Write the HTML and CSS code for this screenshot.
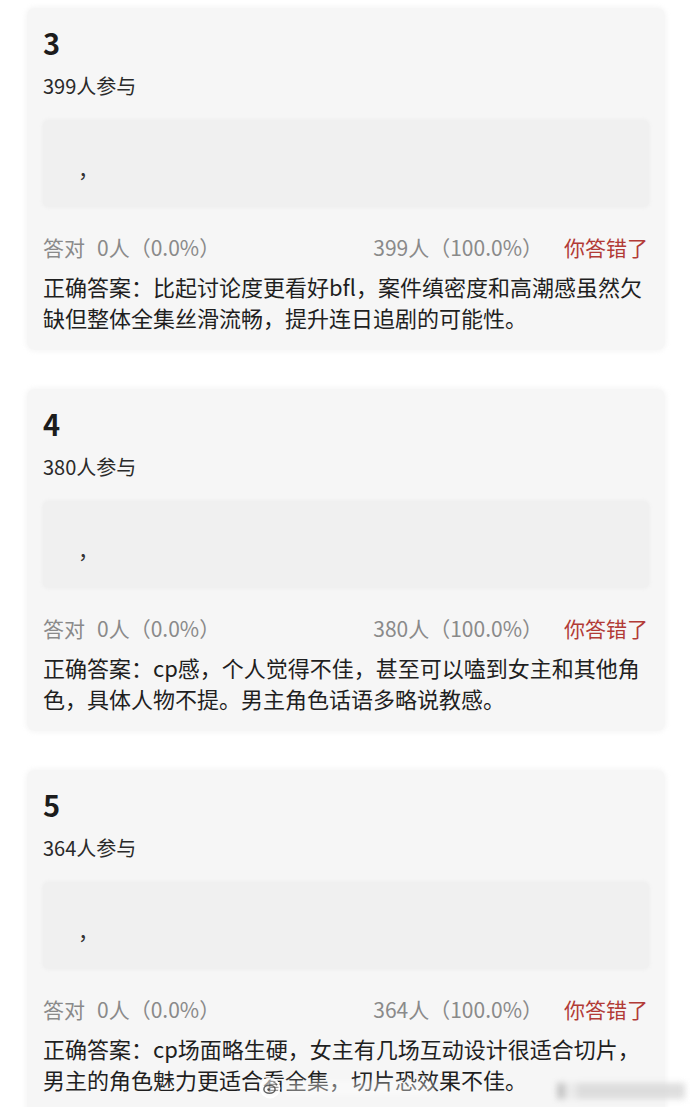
FILE: index.html
```html
<!DOCTYPE html>
<html lang="zh-CN">
<head>
<meta charset="utf-8">
<title>答题结果</title>
<link rel="stylesheet" href="styles.css">
</head>
<body>
<main class="list">
  <section class="card">
    <div class="q-no">3</div>
    <div class="q-count">399人参与</div>
    <div class="option"><span class="option-text">，</span></div>
    <div class="stats">
      <span class="right-count"><span class="label">答对</span>0人（0.0%）</span>
      <span class="wrong">
        <span class="wrong-count">399人（100.0%）</span>
        <span class="verdict">你答错了</span>
      </span>
    </div>
    <p class="answer">正确答案：比起讨论度更看好bfl，案件缜密度和高潮感虽然欠缺但整体全集丝滑流畅，提升连日追剧的可能性。</p>
  </section>

  <section class="card">
    <div class="q-no">4</div>
    <div class="q-count">380人参与</div>
    <div class="option"><span class="option-text">，</span></div>
    <div class="stats">
      <span class="right-count"><span class="label">答对</span>0人（0.0%）</span>
      <span class="wrong">
        <span class="wrong-count">380人（100.0%）</span>
        <span class="verdict">你答错了</span>
      </span>
    </div>
    <p class="answer">正确答案：cp感，个人觉得不佳，甚至可以嗑到女主和其他角色，具体人物不提。男主角色话语多略说教感。</p>
  </section>

  <section class="card card-last">
    <div class="q-no">5</div>
    <div class="q-count">364人参与</div>
    <div class="option"><span class="option-text">，</span></div>
    <div class="stats">
      <span class="right-count"><span class="label">答对</span>0人（0.0%）</span>
      <span class="wrong">
        <span class="wrong-count">364人（100.0%）</span>
        <span class="verdict">你答错了</span>
      </span>
    </div>
    <p class="answer">正确答案：cp场面略生硬，女主有几场互动设计很适合切片，男主的角色魅力更适合看全集，切片恐效果不佳。</p>
    <!-- faint share mark laid over the last card -->
    <div class="watermark" aria-hidden="true">
      <svg class="wm-logo" viewBox="0 0 22 22" width="22" height="22">
        <circle cx="11" cy="11" r="9.5" fill="rgba(255,255,255,0.55)" stroke="rgba(255,255,255,0.95)" stroke-width="1.8"/>
        <ellipse cx="10.5" cy="12.2" rx="5.6" ry="4" fill="none" stroke="rgba(60,60,60,0.8)" stroke-width="1.5"/>
        <circle cx="9.6" cy="12.6" r="1.3" fill="rgba(60,60,60,0.9)"/>
        <path d="M14.5 5.5 a3 3 0 0 1 3 3" fill="none" stroke="rgba(60,60,60,0.7)" stroke-width="1.2"/>
      </svg>
      <span class="wm-band"></span>
    </div>
    <div class="wm-blur"></div>
  </section>
</main>
</body>
</html>
```

FILE: styles.css
```css
html, body {
  margin: 0;
  padding: 0;
  background: #ffffff;
}

body {
  font-family: "Noto Sans CJK SC", "Noto Sans", sans-serif;
  color: #222222;
  overflow: hidden;
}

.list {
  display: flex;
  flex-direction: column;
  gap: 39px;
  padding: 8px 25px 0 27px;
}

.card {
  position: relative;
  background: #f6f6f6;
  border-radius: 8px;
  padding: 16px 16px 17px 16px;
  box-shadow: 0 0 4px 2px rgba(246, 246, 246, 0.9);
}

.q-no {
  font-size: 29px;
  font-weight: 700;
  line-height: 36px;
  color: #1c1c1c;
}

.q-count {
  margin-top: 11px;
  font-size: 20px;
  line-height: 30px;
  color: #2a2a2a;
}

.option {
  margin-top: 19px;
  height: 87px;
  display: flex;
  align-items: center;
  background: #f0f0f0;
  border-radius: 6px;
  padding-left: 35px;
  box-shadow: 0 0 3px 1px rgba(238, 238, 238, 0.8);
}

.option-text {
  font-size: 21px;
  line-height: 30px;
  color: #333333;
  transform: translateY(4px);
}

.stats {
  margin-top: 25px;
  display: flex;
  justify-content: space-between;
  align-items: center;
  font-size: 21px;
  line-height: 30px;
  color: #8a8a8a;
  padding-right: 1px;
}

.label {
  margin-right: 12px;
}

.wrong {
  display: flex;
  gap: 21px;
}

.verdict {
  color: #b23b36;
}

.answer {
  margin: 9px 0 0 0;
  font-size: 22px;
  line-height: 31px;
  color: #1f1f1f;
}

.card-last {
  padding-bottom: 40px;
}

.watermark {
  position: absolute;
  left: 232px;
  top: 307px;
  display: flex;
  align-items: center;
  gap: 4px;
  pointer-events: none;
}

.wm-band {
  display: block;
  width: 150px;
  height: 14px;
  background: rgba(255, 255, 255, 0.4);
  filter: blur(3px);
}

.wm-blur {
  position: absolute;
  left: 530px;
  top: 313px;
  width: 128px;
  height: 16px;
  background: linear-gradient(90deg, #b8b8b8 0 6%, #e8e8e8 6% 16%, #d6d6d6 16% 100%);
  filter: blur(3px);
  opacity: 0.8;
}
```
